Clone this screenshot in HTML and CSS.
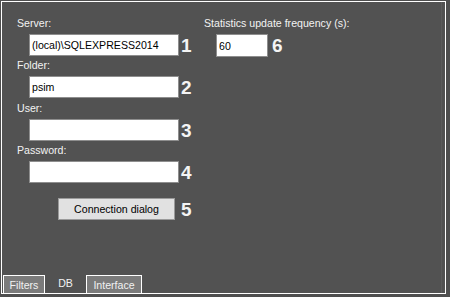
FILE: index.html
```html
<!DOCTYPE html>
<html>
<head>
<meta charset="utf-8">
<link rel="stylesheet" href="styles.css">
</head>
<body>
<div class="panel">
  <div class="content">
    <div class="col-left">
      <div class="label">Server:</div>
      <div class="row">
        <input class="field wide" value="(local)\SQLEXPRESS2014">
        <span class="num">1</span>
      </div>
      <div class="label">Folder:</div>
      <div class="row">
        <input class="field wide" value="psim">
        <span class="num">2</span>
      </div>
      <div class="label label-gap">User:</div>
      <div class="row">
        <input class="field wide" value="">
        <span class="num">3</span>
      </div>
      <div class="label">Password:</div>
      <div class="row">
        <input class="field wide" type="password" value="">
        <span class="num">4</span>
      </div>
      <div class="row btn-row">
        <button class="btn">Connection dialog</button>
        <span class="num">5</span>
      </div>
    </div>
    <div class="col-right">
      <div class="label">Statistics update frequency (s):</div>
      <div class="row">
        <input class="field narrow" value="60">
        <span class="num num6">6</span>
      </div>
    </div>
  </div>
  <div class="tabs">
    <div class="tab tab-filters">Filters</div>
    <div class="tab tab-active">DB</div>
    <div class="tab tab-interface">Interface</div>
  </div>
</div>
</body>
</html>
```
FILE: styles.css
```css
html, body {
  margin: 0;
  padding: 0;
}
body {
  width: 450px;
  height: 297px;
  overflow: hidden;
  background: #4f4f4f;
  font-family: "Liberation Sans", Arial, sans-serif;
  font-size: 10.6px;
  color: #f2f2f2;
}
.panel {
  margin: 1px 0 0 1px;
  width: 443px;
  height: 291px;
  border: 1px solid #ffffff;
  background: #525252;
  display: flex;
  flex-direction: column;
  box-shadow: inset -3px 0 0 #525252, inset -4px 0 0 #5c5c5c;
}
.content {
  flex: 1;
  display: flex;
  padding: 15px 0 0 15px;
}
.col-left {
  width: 187px;
  display: flex;
  flex-direction: column;
}
.col-right {
  display: flex;
  flex-direction: column;
}
.label {
  height: 13px;
  line-height: 13px;
  white-space: nowrap;
}
.label-gap {
  margin-top: 1px;
}
.row {
  display: flex;
  align-items: center;
  margin: 4px 0 3px 12px;
}
.field {
  box-sizing: border-box;
  height: 22px;
  border: 1px solid #8e8e8e;
  background: #ffffff;
  color: #000;
  font-family: "Liberation Sans", Arial, sans-serif;
  font-size: 10.6px;
  padding: 0 0 0 2px;
  margin: 0;
  outline: none;
}
.wide {
  width: 150px;
}
.narrow {
  width: 52px;
  height: 23px;
}
.num {
  font-weight: bold;
  font-size: 19px;
  line-height: 19px;
  color: #f4f4f4;
  margin-left: 2px;
}
.num6 {
  margin-left: 4px;
}
.btn-row {
  margin: 12px 0 0 41px;
}
.btn {
  box-sizing: border-box;
  width: 117px;
  height: 22px;
  margin: 0;
  padding: 0;
  border: 1px solid #9a9a9a;
  background: #e1e1e1;
  color: #000;
  font-family: "Liberation Sans", Arial, sans-serif;
  font-size: 10.6px;
  border-radius: 0;
}
.btn-row .num {
  margin-left: 6px;
}
.tabs {
  display: flex;
  height: 18px;
  padding-left: 1px;
}
.tab {
  box-sizing: border-box;
  height: 18px;
  line-height: 18px;
  text-align: center;
  white-space: nowrap;
}
.tab-filters,
.tab-interface {
  background: #7b7b7b;
  border: 1px solid #ffffff;
  border-bottom: none;
}
.tab-filters {
  width: 42px;
}
.tab-active {
  width: 41px;
  line-height: 16px;
}
.tab-interface {
  width: 56px;
}
```
